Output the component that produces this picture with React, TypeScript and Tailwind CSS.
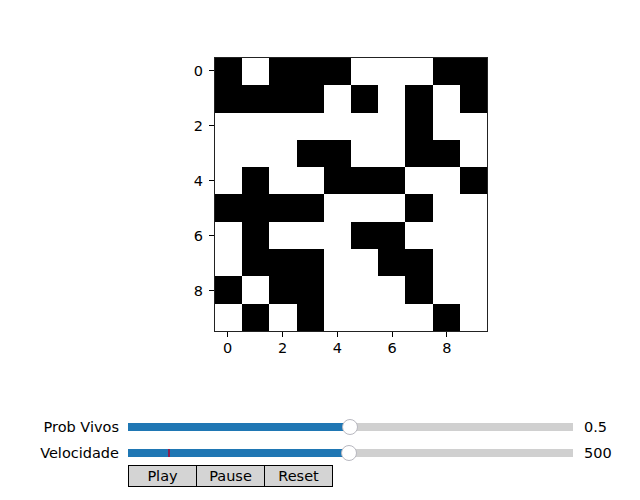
import React from "react";

const grid = [
  [1, 0, 1, 1, 1, 0, 0, 0, 1, 1],
  [1, 1, 1, 1, 0, 1, 0, 1, 0, 1],
  [0, 0, 0, 0, 0, 0, 0, 1, 0, 0],
  [0, 0, 0, 1, 1, 0, 0, 1, 1, 0],
  [0, 1, 0, 0, 1, 1, 1, 0, 0, 1],
  [1, 1, 1, 1, 0, 0, 0, 1, 0, 0],
  [0, 1, 0, 0, 0, 1, 1, 0, 0, 0],
  [0, 1, 1, 1, 0, 0, 1, 1, 0, 0],
  [1, 0, 1, 1, 0, 0, 0, 1, 0, 0],
  [0, 1, 0, 1, 0, 0, 0, 0, 1, 0],
];

const idx = [0, 1, 2, 3, 4, 5, 6, 7, 8, 9];

function SliderRow({
  label,
  value,
  fill,
  mark,
}: {
  label: string;
  value: string;
  fill: number;
  mark?: number;
}) {
  return (
    <div className="flex items-center h-[16px]">
      <span className="w-[119px] text-right leading-[16px]">{label}</span>
      <div className="relative ml-[9px] w-[445px] h-[8px] bg-[#d0d0d0]">
        <div className="absolute left-0 top-0 h-full bg-[#1f77b4]" style={{ width: fill }} />
        {mark !== undefined && (
          <div className="absolute top-0 h-full w-[2px] bg-[#8a2050]" style={{ left: mark }} />
        )}
        <div
          className="absolute top-[-4px] w-[16px] h-[16px] rounded-full bg-white border-[1.5px] border-[#b8b8c0]"
          style={{ left: fill - 8 }}
        />
      </div>
      <span className="ml-[11px] leading-[16px]">{value}</span>
    </div>
  );
}

export default function App() {
  return (
    <div
      className="w-[640px] h-[500px] bg-white text-black text-[14.5px] overflow-hidden"
      style={{ fontFamily: '"DejaVu Sans", sans-serif' }}
    >
      <div className="pt-[57px]">
        {/* heatmap with y ticks */}
        <div className="flex pl-[150px]">
          <div className="w-[64px] h-[275px] grid grid-rows-10">
            {idx.map((i) => (
              <div key={i} className="flex items-center justify-end">
                {i % 2 === 0 && (
                  <>
                    <span className="leading-[16px]">{i}</span>
                    <div className="ml-[6px] w-[5px] h-px bg-black" />
                  </>
                )}
              </div>
            ))}
          </div>
          <div className="w-[274px] h-[275px] border border-[#222] grid grid-cols-10 grid-rows-10">
            {grid.flatMap((row, r) =>
              row.map((c, k) => (
                <div key={r + "-" + k} className={c ? "bg-black" : "bg-white"} />
              ))
            )}
          </div>
        </div>

        {/* x ticks */}
        <div className="flex pl-[214px]">
          <div className="w-[274px] grid grid-cols-10">
            {idx.map((i) => (
              <div key={i} className="flex flex-col items-center">
                {i % 2 === 0 && (
                  <>
                    <div className="w-px h-[5px] bg-black" />
                    <span className="mt-[3px] leading-[16px]">{i}</span>
                  </>
                )}
              </div>
            ))}
          </div>
        </div>

        {/* controls */}
        <div className="mt-[63px] flex flex-col gap-[10px]">
          <SliderRow label="Prob Vivos" value="0.5" fill={222} />
          <SliderRow label="Velocidade" value="500" fill={221} mark={40} />
        </div>
        <div className="mt-[4px] ml-[128px] flex">
          {["Play", "Pause", "Reset"].map((b, i) => (
            <button
              key={b}
              className={
                "w-[69px] h-[22px] border border-black bg-[#d4d4d4] leading-[18px] text-center " +
                (i > 0 ? "-ml-px" : "")
              }
            >
              {b}
            </button>
          ))}
        </div>
      </div>
    </div>
  );
}
